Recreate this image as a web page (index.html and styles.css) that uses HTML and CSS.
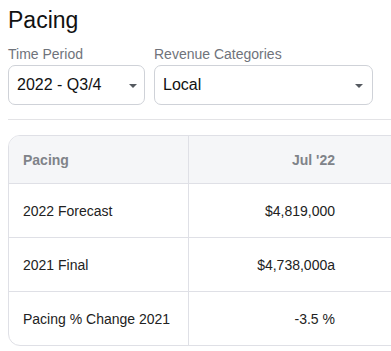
FILE: index.html
```html
<!DOCTYPE html>
<html>
<head>
<meta charset="utf-8">
<link rel="stylesheet" href="styles.css">
</head>
<body>
<div class="page">
  <h1 class="title">Pacing</h1>
  <div class="filters">
    <div class="field field-period">
      <div class="label">Time Period</div>
      <div class="select">
        <span class="value">2022 - Q3/4</span>
        <span class="caret"></span>
      </div>
    </div>
    <div class="field field-cat">
      <div class="label">Revenue Categories</div>
      <div class="select">
        <span class="value">Local</span>
        <span class="caret"></span>
      </div>
    </div>
  </div>
  <div class="rule"></div>
  <div class="table-wrap">
    <table class="grid">
      <thead>
        <tr>
          <th class="c1">Pacing</th>
          <th class="c2">Jul '22</th>
        </tr>
      </thead>
      <tbody>
        <tr>
          <td class="c1">2022 Forecast</td>
          <td class="c2">$4,819,000</td>
        </tr>
        <tr>
          <td class="c1">2021 Final</td>
          <td class="c2">$4,738,000a</td>
        </tr>
        <tr class="last">
          <td class="c1">Pacing % Change 2021</td>
          <td class="c2">-3.5 %</td>
        </tr>
      </tbody>
    </table>
  </div>
</div>
</body>
</html>
```
FILE: styles.css
```css
html, body {
  margin: 0;
  padding: 0;
  background: #ffffff;
}
body {
  font-family: "Liberation Sans", Arial, sans-serif;
  color: #1f1f1f;
}
.page {
  width: 391px;
  height: 351px;
  overflow: hidden;
  padding: 6px 0 0 8px;
  box-sizing: border-box;
}
.title {
  margin: 0;
  font-size: 23px;
  line-height: 28px;
  font-weight: 400;
  color: #111111;
}
.filters {
  display: flex;
  gap: 9px;
  margin-top: 10px;
}
.field-period { width: 137px; }
.field-cat { width: 219px; }
.label {
  font-size: 14px;
  line-height: 20px;
  color: #6f737b;
  margin-bottom: 1px;
}
.select {
  height: 40px;
  box-sizing: border-box;
  border: 1px solid #cfd2d8;
  border-radius: 7px;
  display: flex;
  align-items: center;
  justify-content: space-between;
  padding: 0 8px 0 8px;
  font-size: 16px;
  color: #111111;
}
.caret {
  width: 0;
  height: 0;
  border-left: 4px solid transparent;
  border-right: 4px solid transparent;
  border-top: 4px solid #555a60;
  margin: 1px 0 0 0;
}
.field-cat .caret {
  margin-right: 1px;
}
.field-period .caret {
  margin-right: -1px;
}
.rule {
  height: 1px;
  background: #e3e3e6;
  margin: 14px -20px 0 0;
}
.table-wrap {
  margin-top: 15px;
  width: 420px;
}
.grid {
  border-collapse: separate;
  border-spacing: 0;
  border: 1px solid #dfe0e6;
  border-radius: 12px;
  overflow: hidden;
  font-size: 14px;
  width: 100%;
}
.grid th, .grid td {
  padding: 0 14px;
  border-bottom: 1px solid #dfe0e6;
  white-space: nowrap;
}
.grid th {
  height: 47px;
  background: #f5f6f8;
  color: #808389;
  font-weight: 700;
  text-align: left;
}
.grid td {
  height: 53px;
  color: #222222;
}
.grid .last td {
  border-bottom: none;
}
.grid .c1 {
  width: 151px;
  border-right: 1px solid #dfe0e6;
}
.grid th.c2, .grid td.c2 {
  text-align: right;
  padding-right: 92px;
}
```
